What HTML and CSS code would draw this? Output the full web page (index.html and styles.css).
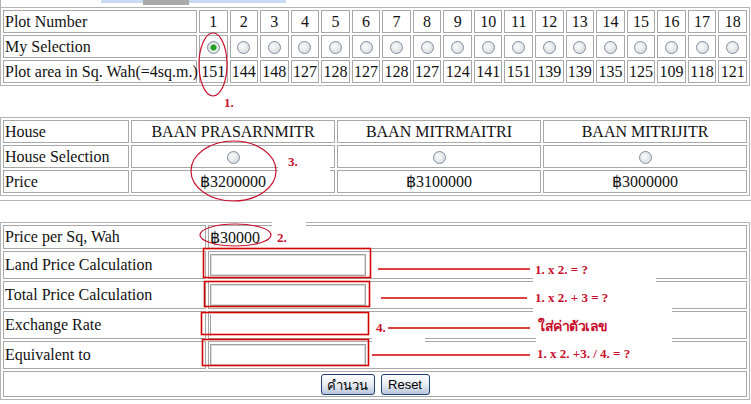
FILE: index.html
```html
<!DOCTYPE html>
<html lang="en">
<head>
  <meta charset="UTF-8" />
  <title>Plot and House Selection</title>
  <link rel="stylesheet" href="styles.css">
</head>
<body>
<div class="page">
  <div class="topbar"></div>

  <table class="grid plots">
    <tr>
      <td class="lbl">Plot Number</td>
      <td>1</td><td>2</td><td>3</td><td>4</td><td>5</td><td>6</td><td>7</td><td>8</td><td>9</td>
      <td>10</td><td>11</td><td>12</td><td>13</td><td>14</td><td>15</td><td>16</td><td>17</td><td>18</td>
    </tr>
    <tr>
      <td class="lbl">My Selection</td>
      <td><input type="radio" name="plot" checked></td>
      <td><input type="radio" name="plot"></td>
      <td><input type="radio" name="plot"></td>
      <td><input type="radio" name="plot"></td>
      <td><input type="radio" name="plot"></td>
      <td><input type="radio" name="plot"></td>
      <td><input type="radio" name="plot"></td>
      <td><input type="radio" name="plot"></td>
      <td><input type="radio" name="plot"></td>
      <td><input type="radio" name="plot"></td>
      <td><input type="radio" name="plot"></td>
      <td><input type="radio" name="plot"></td>
      <td><input type="radio" name="plot"></td>
      <td><input type="radio" name="plot"></td>
      <td><input type="radio" name="plot"></td>
      <td><input type="radio" name="plot"></td>
      <td><input type="radio" name="plot"></td>
      <td><input type="radio" name="plot"></td>
    </tr>
    <tr>
      <td class="lbl">Plot area in Sq. Wah(=4sq.m.)</td>
      <td>151</td><td>144</td><td>148</td><td>127</td><td>128</td><td>127</td><td>128</td><td>127</td><td>124</td>
      <td>141</td><td>151</td><td>139</td><td>139</td><td>135</td><td>125</td><td>109</td><td>118</td><td>121</td>
    </tr>
  </table>

  <table class="grid houses">
    <tr>
      <td class="lbl">House</td>
      <td>BAAN PRASARNMITR</td>
      <td>BAAN MITRMAITRI</td>
      <td>BAAN MITRIJITR</td>
    </tr>
    <tr>
      <td class="lbl">House Selection</td>
      <td><input type="radio" name="house"></td>
      <td><input type="radio" name="house"></td>
      <td><input type="radio" name="house"></td>
    </tr>
    <tr>
      <td class="lbl">Price</td>
      <td>฿3200000</td>
      <td>฿3100000</td>
      <td>฿3000000</td>
    </tr>
  </table>

  <div class="rule"></div>

  <table class="grid calc">
    <tr class="first">
      <td class="lbl">Price per Sq, Wah</td>
      <td class="val">฿30000</td>
    </tr>
    <tr>
      <td class="lbl">Land Price Calculation</td>
      <td class="val"><input type="text" class="box"></td>
    </tr>
    <tr>
      <td class="lbl">Total Price Calculation</td>
      <td class="val"><input type="text" class="box"></td>
    </tr>
    <tr>
      <td class="lbl">Exchange Rate</td>
      <td class="val"><input type="text" class="box bare"></td>
    </tr>
    <tr>
      <td class="lbl">Equivalent to</td>
      <td class="val"><input type="text" class="box"></td>
    </tr>
    <tr class="last">
      <td colspan="2">
        <div class="btns">
          <button type="button" class="btn-calc">คำนวน</button>
          <button type="reset" class="btn-reset">Reset</button>
        </div>
      </td>
    </tr>
  </table>

  <!-- hand-drawn notes over the form -->
  <span class="note n1">1.</span>
  <span class="note n3">3.</span>
  <span class="note n2">2.</span>
  <span class="note f1">1. x 2. = ?</span>
  <span class="note f2">1. x 2. + 3 = ?</span>
  <span class="note n4">4.</span>
  <span class="note thai">ใส่ค่าตัวเลข</span>
  <span class="note f4">1. x 2. +3. / 4. = ?</span>

  <svg class="marks" width="751" height="404" viewBox="0 0 751 404">
    <g fill="none" stroke="#c8102e" stroke-width="1.2">
      <ellipse cx="213" cy="64.5" rx="14" ry="31.5"/>
      <ellipse cx="233.5" cy="171" rx="42.5" ry="30"/>
      <ellipse cx="235.5" cy="235" rx="35.5" ry="11"/>
    </g>
    <g fill="none" stroke="#d40000" stroke-width="1.6">
      <rect x="203.5" y="248.5" width="167" height="29"/>
      <rect x="204.5" y="281.5" width="165" height="25"/>
      <rect x="201.5" y="312.5" width="167" height="22"/>
      <rect x="202.5" y="339.5" width="166" height="26"/>
      <line x1="378" y1="269" x2="530" y2="269"/>
      <line x1="381" y1="298" x2="527" y2="298"/>
      <line x1="388" y1="328" x2="530" y2="328"/>
      <line x1="372" y1="355" x2="530" y2="355"/>
    </g>
  </svg>
</div>
</body>
</html>
```

FILE: styles.css
```css
body { margin: 0; font-family: "Liberation Serif", serif; font-size: 16px; color: #111; background: #fff; }
.page { position: relative; width: 751px; height: 404px; overflow: hidden; }

.topbar {
  height: 7px;
  border-left: 1px solid #b0b0b0;
  box-sizing: border-box;
  background:
    linear-gradient(#a9a9a9, #a9a9a9) 142px 0 / 46px 5px no-repeat,
    linear-gradient(#c9daf2, #c9daf2) 100px 0 / 185px 3px no-repeat;
}

.grid { width: 750px; border: 1px solid #b4b4b4; border-spacing: 2px; table-layout: fixed; }
.grid td { border: 1px solid #a8a8a8; padding: 0 1px; height: 23px; box-sizing: border-box; text-align: center; vertical-align: middle; white-space: nowrap; }
.grid td.lbl { text-align: left; }

.plots .lbl { width: 194px; }
.houses { margin-top: 31px; }
.houses .lbl { width: 126px; }

.rule { margin-top: 4px; height: 21px; border-top: 1px solid #b4b4b4; }

.calc .lbl { width: 203px; }
.calc td { height: 28px; }
.calc .first td { height: 24px; }
.calc .last td { height: 26px; }
.calc td.val { text-align: left; }

input[type=radio] {
  appearance: none;
  width: 13px; height: 13px; margin: 0;
  border: 1px solid #7f8d9c; border-radius: 50%;
  background: radial-gradient(circle at 40% 40%, #fbfbfb, #cfd5dc);
  vertical-align: middle;
}
input[type=radio]:checked {
  background: radial-gradient(circle, #23a023 0 2.5px, #e4ebe4 3.5px, #cfd5dc);
}

.box { display: block; width: 156px; height: 22px; margin: 0; padding: 0; box-sizing: border-box; border: 1px solid #a0a0a0; box-shadow: inset 0 0 0 1px #dcdcdc; }
.box.bare { border-color: transparent transparent transparent #a0a0a0; box-shadow: none; }

.btns { display: flex; justify-content: center; gap: 6px; }
.btns button {
  height: 21px; padding: 0; box-sizing: border-box;
  font: 13px "Liberation Sans", "Noto Sans", sans-serif; color: #000;
  border: 1px solid #1e3f78; border-radius: 3px;
  background: linear-gradient(#ffffff, #e4e9f1 55%, #b7c5da);
}
.btn-calc { width: 54px; }
.btn-reset { width: 49px; }

.note { position: absolute; background: #fff; color: #c8102e; font: bold 13px/15px "Liberation Serif", serif; white-space: nowrap; box-sizing: border-box; }
.n1 { left: 224px; top: 95px; background: transparent; }
.n3 { left: 278px; top: 150px; width: 52px; height: 25px; padding: 4px 0 0 10px; }
.n2 { left: 272px; top: 222px; width: 34px; height: 29px; padding: 8px 0 0 5px; }
.f1 { left: 533px; top: 262px; width: 123px; height: 22px; padding: 0 0 0 2px; }
.f2 { left: 533px; top: 290px; width: 139px; height: 23px; padding: 0 0 0 2px; }
.n4 { left: 372px; top: 318px; width: 53px; height: 24px; padding: 2px 0 0 4px; }
.thai { left: 536px; top: 314px; width: 136px; height: 28px; padding: 2px 0 0 2px; font: bold 14px/20px "Noto Sans", "DejaVu Sans", sans-serif; letter-spacing: -0.5px; }
.f4 { left: 535px; top: 346px; padding: 0 2px; }

.marks { position: absolute; left: 0; top: 0; pointer-events: none; }
```
